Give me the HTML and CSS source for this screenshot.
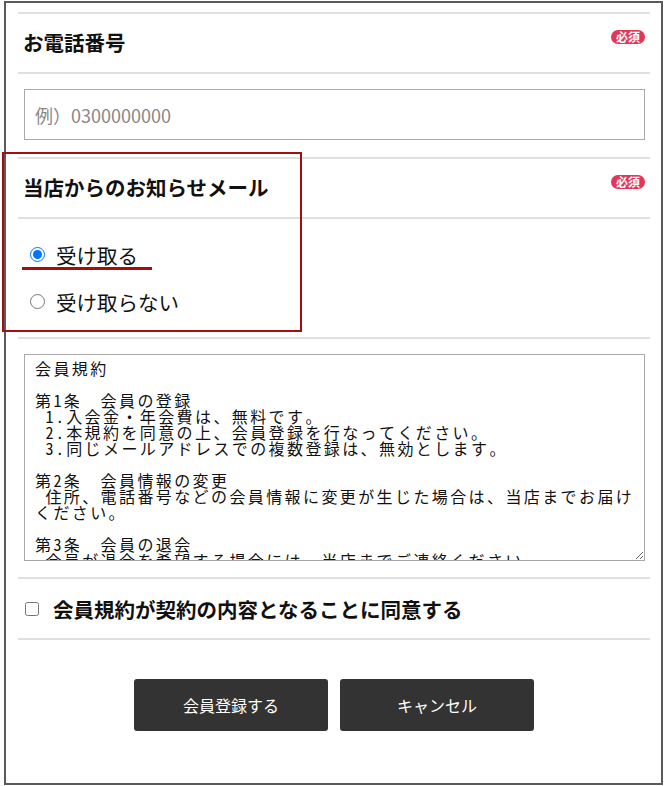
FILE: index.html
```html
<!DOCTYPE html>
<html lang="ja">
<head>
  <meta charset="UTF-8" />
  <meta name="viewport" content="width=device-width, initial-scale=1.0"/>
  <title>会員登録</title>
  <link rel="stylesheet" href="styles.css">
</head>
<body>

  <div class="frame">

    <div class="row head">
      <span class="title">お電話番号</span>
      <span class="badge">必須</span>
    </div>
    <div class="row field">
      <input type="text" class="text-input" placeholder="例）0300000000" />
    </div>

    <div class="row head">
      <span class="title">当店からのお知らせメール</span>
      <span class="badge">必須</span>
    </div>
    <div class="row radios">
      <label class="choice"><input type="radio" name="mail" checked /> 受け取る</label>
      <label class="choice"><input type="radio" name="mail" /> 受け取らない</label>
    </div>

    <div class="row terms">
      <textarea class="terms-box" readonly>会員規約

第1条　会員の登録
 1.入会金・年会費は、無料です。
 2.本規約を同意の上、会員登録を行なってください。
 3.同じメールアドレスでの複数登録は、無効とします。

第2条　会員情報の変更
 住所、電話番号などの会員情報に変更が生じた場合は、当店までお届けください。

第3条　会員の退会
 会員が退会を希望する場合には、当店までご連絡ください。</textarea>
    </div>

    <div class="row agree">
      <label class="agree-label"><input type="checkbox" /> 会員規約が契約の内容となることに同意する</label>
    </div>

    <div class="row actions">
      <button class="btn">会員登録する</button>
      <button class="btn">キャンセル</button>
    </div>

    <!-- annotation marks -->
    <div class="mark-box"></div>
    <div class="mark-line"></div>
  </div>

</body>
</html>
```

FILE: styles.css
```css
body {
  margin: 0;
  font-family: "Noto Sans CJK JP", "Noto Sans", sans-serif;
  color: #111;
  background: #fff;
}
.frame {
  position: relative;
  box-sizing: border-box;
  width: 659px;
  height: 784px;
  margin: 1px 0 0 4px;
  border: 2px solid #5a5a5a;
  padding: 9px 11px 0 12px;
}
.row {
  border-top: 2px solid #e0e0e0;
}
.head {
  display: flex;
  justify-content: space-between;
  align-items: flex-start;
  height: 60px;
  box-sizing: border-box;
  padding: 14px 5px 0 5px;
}
.title {
  font-size: 20.5px;
  font-weight: bold;
  line-height: 28px;
}
.badge {
  margin-top: 2px;
  height: 14px;
  padding: 0 5px;
  border-radius: 7px;
  background: #e3375a;
  color: #fff;
  font-size: 12px;
  font-weight: bold;
  line-height: 14px;
}
.field {
  padding: 15px 5px 17px 6px;
}
.text-input {
  display: block;
  box-sizing: border-box;
  width: 621px;
  height: 51px;
  border: 1px solid #aaa;
  padding: 0 10px;
  font-family: inherit;
  font-size: 18px;
  color: #111;
}
.text-input::placeholder {
  color: #888;
}
.radios {
  padding: 12px 0;
}
.choice {
  display: flex;
  align-items: center;
  height: 47px;
  padding-left: 12px;
  font-size: 20.5px;
  gap: 11px;
}
.choice input {
  width: 15px;
  height: 15px;
  margin: 0;
}
.terms {
  padding: 15px 0 16px 6px;
}
.terms-box {
  display: block;
  box-sizing: border-box;
  width: 621px;
  height: 207px;
  margin: 0;
  border: 1px solid #aaa;
  padding: 5px 6px 0 10px;
  overflow: hidden;
  font-family: "Noto Sans Mono CJK JP", "Noto Sans CJK JP", monospace;
  font-size: 16px;
  letter-spacing: 2.4px;
  line-height: 16px;
  color: #111;
}
.agree {
  height: 61px;
  box-sizing: border-box;
  display: flex;
  align-items: center;
}
.agree-label {
  display: flex;
  align-items: center;
  gap: 14px;
  padding-left: 7px;
  font-size: 20.5px;
  font-weight: bold;
}
.agree-label input {
  width: 14px;
  height: 14px;
  margin: 0;
}
.actions {
  display: flex;
  justify-content: center;
  gap: 12px;
  padding-top: 39px;
}
.btn {
  width: 194px;
  height: 52px;
  border: none;
  border-radius: 3px;
  background: #333;
  color: #fff;
  font-family: inherit;
  font-size: 16px;
  cursor: pointer;
}
.mark-box {
  position: absolute;
  left: -4px;
  top: 149px;
  width: 300px;
  height: 180px;
  box-sizing: border-box;
  border: 2px solid #a50e0e;
}
.mark-line {
  position: absolute;
  left: 16px;
  top: 264px;
  width: 130px;
  height: 3px;
  background: #a50e0e;
}
```
